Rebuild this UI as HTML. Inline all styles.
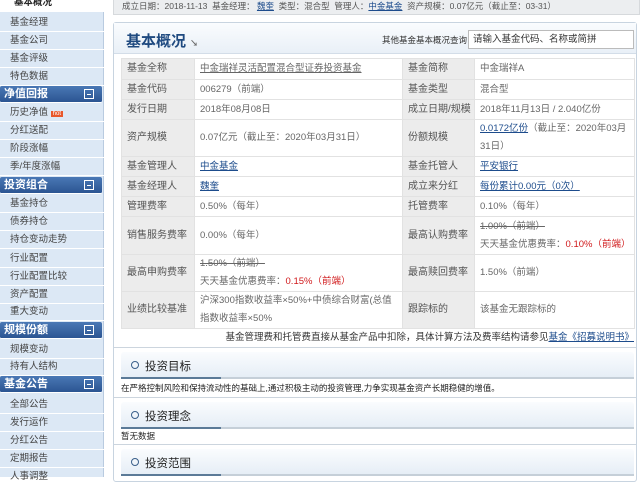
<!DOCTYPE html>
<html><head><meta charset="utf-8"><style>
*{margin:0;padding:0;box-sizing:border-box}
body{width:640px;height:477px;overflow:hidden;background:#fff;font-family:"Liberation Sans","Noto Sans CJK SC",sans-serif;font-size:10px;color:#333;position:relative}
#side{position:absolute;left:0;top:0;width:104px;height:477px;background:#dce8f5;border-right:1px solid #b9cbe0}
#side div{position:absolute;left:0;width:104px;height:18px;line-height:17px;padding-left:10px;border-bottom:1px solid #fff;color:#444;font-size:9.5px}
#side .h{background:linear-gradient(#4a78b5,#2b5592);color:#fff;font-weight:bold;font-size:11px;padding-left:4px;height:17px;line-height:17px;border-radius:2px;width:102px}
#side .h b{position:absolute;right:8px;top:3px;width:10px;height:10px;border:1px solid #fff;font-size:0}
#side .h b:after{content:"";position:absolute;left:2px;top:4px;width:4px;height:1px;background:#fff}
a{color:#1d4c8c;text-decoration:underline}
#top{position:absolute;left:113px;top:0;width:527px;height:15px;background:#eceef0;border:1px solid #d6d9dc;border-top:0;font-size:8.5px;color:#555;line-height:13px;padding-left:8px;white-space:nowrap}
#panel{position:absolute;left:113px;top:22px;width:524px;height:460px;border:1px solid #c8d4e0;border-radius:3px}
#title{position:absolute;left:0;top:0;width:522px;height:31px;background:linear-gradient(#fafcfe,#e9f0f7);border-bottom:1px solid #d3dde8}
#title h1{position:absolute;left:12px;top:7px;font-size:15px;color:#1f4a80}
#q{position:absolute;left:268px;top:11px;font-size:8.5px;color:#333}
#inp{position:absolute;left:354px;top:7px;width:166px;height:19px;border:1px solid #bbb;background:#fff;font-size:9.5px;line-height:17px;padding-left:4px;color:#333}
table{position:absolute;left:7px;top:35px;width:513px;border-collapse:collapse;table-layout:fixed}
td{border:1px solid #e2e2e2;padding:0 5px;font-size:9.5px;color:#666;vertical-align:middle;line-height:18px;white-space:nowrap;overflow:hidden}
td.w{white-space:normal}
td.l{background:#ececec;color:#555;font-size:10px}
.r{color:#d0181a}
s{color:#666}
.note{position:absolute;left:7px;top:307px;width:513px;text-align:right;font-size:9.5px;color:#333;white-space:nowrap;line-height:16px}
.sec{position:absolute;left:7px;width:513px;height:27px;background:linear-gradient(#fafcfe,#e6eef6);border-bottom:2px solid #c5cfd8;border-radius:3px 3px 0 0}
.sec span{position:absolute;left:10px;top:6px;font-size:11.5px;color:#222}
.sec span:before{content:"";display:inline-block;width:6px;height:6px;border:1.5px solid #3a5f8a;border-radius:50%;margin-right:6px;vertical-align:1px}
.sec i{position:absolute;left:0;bottom:-2px;width:100px;height:2px;background:#5b7a97}
.txt{position:absolute;left:7px;font-size:8.5px;color:#222;white-space:nowrap}
.hr{position:absolute;left:0;width:522px;height:1px;background:#ccd5de}
</style></head><body>
<div id="side">
<div style="top:-6px;font-weight:bold;color:#222;background:#fff;padding-left:14px">基本概况</div>
<div style="top:14px">基金经理</div>
<div style="top:32px">基金公司</div>
<div style="top:50px">基金评级</div>
<div style="top:68px">特色数据</div>
<div class="h" style="top:86px">净值回报<b></b></div>
<div style="top:104px">历史净值 <span style="background:#e8572b;color:#fff;font-size:6px;padding:0 2px">hot</span></div>
<div style="top:122px">分红送配</div>
<div style="top:140px">阶段涨幅</div>
<div style="top:158px">季/年度涨幅</div>
<div class="h" style="top:177px">投资组合<b></b></div>
<div style="top:195px">基金持仓</div>
<div style="top:213px">债券持仓</div>
<div style="top:231px">持仓变动走势</div>
<div style="top:250px">行业配置</div>
<div style="top:268px">行业配置比较</div>
<div style="top:286px">资产配置</div>
<div style="top:303px">重大变动</div>
<div class="h" style="top:322px">规模份额<b></b></div>
<div style="top:341px">规模变动</div>
<div style="top:358px">持有人结构</div>
<div class="h" style="top:376px">基金公告<b></b></div>
<div style="top:396px">全部公告</div>
<div style="top:414px">发行运作</div>
<div style="top:432px">分红公告</div>
<div style="top:450px">定期报告</div>
<div style="top:468px">人事调整</div>
</div>
<div id="top">成立日期：2018-11-13 &nbsp;基金经理： <a>魏奎</a> &nbsp;类型：混合型 &nbsp;管理人：<a>中金基金</a> &nbsp;资产规模：0.07亿元（截止至：03-31）</div>
<div id="panel">
<div id="title"><h1>基本概况 <span style="font-size:8px;color:#666">↘</span></h1><span id="q">其他基金基本概况查询：</span><div id="inp">请输入基金代码、名称或简拼</div></div>
<table>
<colgroup><col style="width:73px"><col style="width:208px"><col style="width:72px"><col style="width:160px"></colgroup>
<tr style="height:21px"><td class="l">基金全称</td><td><a style="color:#666">中金瑞祥灵活配置混合型证券投资基金</a></td><td class="l">基金简称</td><td>中金瑞祥A</td></tr>
<tr style="height:20px"><td class="l">基金代码</td><td>006279（前端）</td><td class="l">基金类型</td><td>混合型</td></tr>
<tr style="height:20px"><td class="l">发行日期</td><td>2018年08月08日</td><td class="l">成立日期/规模</td><td>2018年11月13日 / 2.040亿份</td></tr>
<tr style="height:37px"><td class="l">资产规模</td><td>0.07亿元（截止至：2020年03月31日）</td><td class="l">份额规模</td><td class="w"><a>0.0172亿份</a>（截止至：2020年03月31日）</td></tr>
<tr style="height:20px"><td class="l">基金管理人</td><td><a>中金基金</a></td><td class="l">基金托管人</td><td><a>平安银行</a></td></tr>
<tr style="height:20px"><td class="l">基金经理人</td><td><a>魏奎</a></td><td class="l">成立来分红</td><td><a>每份累计0.00元（0次）</a></td></tr>
<tr style="height:20px"><td class="l">管理费率</td><td>0.50%（每年）</td><td class="l">托管费率</td><td>0.10%（每年）</td></tr>
<tr style="height:38px"><td class="l">销售服务费率</td><td>0.00%（每年）</td><td class="l">最高认购费率</td><td><s>1.00%（前端）</s><br>天天基金优惠费率：<span class="r">0.10%（前端）</span></td></tr>
<tr style="height:37px"><td class="l">最高申购费率</td><td><s>1.50%（前端）</s><br>天天基金优惠费率：<span class="r">0.15%（前端）</span></td><td class="l">最高赎回费率</td><td>1.50%（前端）</td></tr>
<tr style="height:37px"><td class="l">业绩比较基准</td><td class="w">沪深300指数收益率×50%+中债综合财富(总值指数收益率×50%</td><td class="l">跟踪标的</td><td>该基金无跟踪标的</td></tr>
</table>
<div class="note">基金管理费和托管费直接从基金产品中扣除，具体计算方法及费率结构请参见<a>基金《招募说明书》</a></div>
<div class="hr" style="top:324px"></div>
<div class="sec" style="top:329px"><span>投资目标</span><i></i></div>
<div class="txt" style="top:359px">在严格控制风险和保持流动性的基础上,通过积极主动的投资管理,力争实现基金资产长期稳健的增值。</div>
<div class="hr" style="top:374px"></div>
<div class="sec" style="top:379px"><span>投资理念</span><i></i></div>
<div class="txt" style="top:407px">暂无数据</div>
<div class="hr" style="top:421px"></div>
<div class="sec" style="top:426px"><span>投资范围</span><i></i></div>
</div>
</body></html>
